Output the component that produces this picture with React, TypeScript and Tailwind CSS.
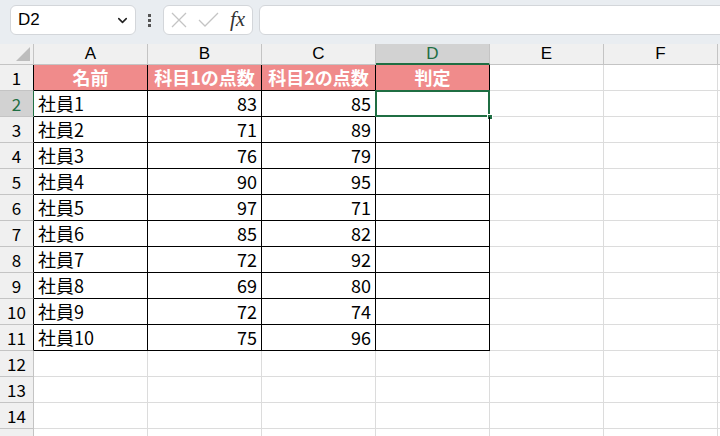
import { ChevronDown } from "lucide-react";

const cols = ["A", "B", "C", "D", "E", "F"];

const data = [
  ["社員1", 83, 85],
  ["社員2", 71, 89],
  ["社員3", 76, 79],
  ["社員4", 90, 95],
  ["社員5", 97, 71],
  ["社員6", 85, 82],
  ["社員7", 72, 92],
  ["社員8", 69, 80],
  ["社員9", 72, 74],
  ["社員10", 75, 96],
];

const font = { fontFamily: '"Noto Sans CJK JP", "Noto Sans", sans-serif' };

function RowHeader({ n, selected, table }: { n?: number; selected?: boolean; table?: boolean }) {
  // right edge doubles as the table's left border
  const edge = selected ? "border-r-[#1f6e43]" : table ? "border-r-black" : "border-r-[#c4c4c4]";
  return (
    <div
      className={`w-[34px] shrink-0 h-full flex items-center justify-center border-r border-b border-b-[#c4c4c4] text-[17px] ${edge} ${
        selected ? "bg-[#d2d2d2] text-[#1f6e43]" : "bg-[#f0f0f0] text-black"
      }`}
    >
      {n}
    </div>
  );
}

function EmptyCell() {
  return <div className="w-[114px] shrink-0 h-full border-r border-b border-[#dcdcdc]" />;
}

function Cell({ children, align = "left" }: { children?: React.ReactNode; align?: "left" | "right" }) {
  return (
    <div
      className={`w-[114px] shrink-0 h-full border-r border-b border-black flex items-center px-[4px] text-[18px] text-black ${
        align === "right" ? "justify-end" : "justify-start"
      }`}
    >
      {children}
    </div>
  );
}

export default function App() {
  return (
    <div className="w-[720px] h-[436px] overflow-hidden bg-white select-none" style={font}>
      {/* formula bar */}
      <div className="h-[44px] bg-[#e9edf1] flex items-start pt-[5px] pl-[10px] overflow-hidden">
        <div className="w-[126px] shrink-0 h-[30px] bg-white border border-[#d3d6da] rounded-[6px] flex items-center justify-between pl-[7px] pr-[5px]">
          <span className="text-[17px] text-black" style={{ fontFamily: '"Liberation Sans", sans-serif' }}>
            D2
          </span>
          <ChevronDown className="w-[15px] h-[15px] text-[#222]" strokeWidth={2.5} />
        </div>
        <div className="w-[27px] shrink-0 h-[30px] flex flex-col items-center justify-center gap-[2px]">
          <span className="w-[3px] h-[3px] bg-[#555]" />
          <span className="w-[3px] h-[3px] bg-[#555]" />
          <span className="w-[3px] h-[3px] bg-[#555]" />
        </div>
        <div className="w-[90px] shrink-0 h-[30px] bg-white border border-[#d3d6da] rounded-[6px] flex items-center pl-[7px] gap-[11px]">
          <svg width="16" height="16" viewBox="0 0 16 16" fill="none" stroke="#c4c4c4" strokeWidth="1.3">
            <path d="M1 1 L15 15 M15 1 L1 15" />
          </svg>
          <svg width="21" height="16" viewBox="0 0 21 16" fill="none" stroke="#c4c4c4" strokeWidth="1.3">
            <path d="M1 8 L7 14 L20 1" />
          </svg>
          <span
            className="text-[21px] italic text-[#333] leading-none -mt-[2px]"
            style={{ fontFamily: '"Liberation Serif", serif' }}
          >
            fx
          </span>
        </div>
        <div className="ml-[6px] w-[470px] shrink-0 h-[30px] bg-white border border-[#d3d6da] rounded-[6px]" />
      </div>

      {/* column headers */}
      <div
        className="h-[21px] flex bg-[#f0f0f0] text-[17px]"
        style={{ fontFamily: '"Liberation Sans", sans-serif' }}
      >
        <div className="w-[34px] shrink-0 h-full border-r border-b border-[#c4c4c4] relative">
          <svg className="absolute right-[3px] bottom-[3px]" width="14" height="14" viewBox="0 0 14 14">
            <path d="M14 0 L14 14 L0 14 Z" fill="#bdbdbd" />
          </svg>
        </div>
        {cols.map((c) =>
          c === "D" ? (
            <div
              key={c}
              className="w-[114px] shrink-0 h-full bg-[#d2d2d2] text-[#1f6e43] border-r border-r-[#c4c4c4] border-b-2 border-b-[#1f6e43] flex items-center justify-center"
            >
              {c}
            </div>
          ) : (
            <div
              key={c}
              className="w-[114px] shrink-0 h-full border-r border-b border-[#c4c4c4] flex items-center justify-center"
            >
              {c}
            </div>
          )
        )}
        <div className="flex-1 h-full border-b border-[#c4c4c4]" />
      </div>

      {/* row 1: header row */}
      <div className="h-[26px] flex">
        <RowHeader n={1} table />
        {["名前", "科目1の点数", "科目2の点数", "判定"].map((h) => (
          <div
            key={h}
            className="w-[114px] shrink-0 h-full bg-[#f08b8b] border-r border-b border-black flex items-center justify-center text-[18px] font-bold text-white"
          >
            {h}
          </div>
        ))}
        <EmptyCell />
        <EmptyCell />
        <div className="flex-1 h-full border-b border-[#dcdcdc]" />
      </div>

      {/* data rows */}
      {data.map((r, i) => (
        <div key={i} className="h-[26px] flex">
          <RowHeader n={i + 2} selected={i === 0} table />
          <Cell>{r[0]}</Cell>
          <Cell align="right">{r[1]}</Cell>
          <Cell align="right">{r[2]}</Cell>
          <div className="relative w-[114px] shrink-0 h-full border-r border-b border-black">
            {i === 0 && (
              <>
                <div className="absolute -left-[1px] -top-[1px] -right-[1px] -bottom-[1px] border-2 border-[#1f6e43]" />
                <div className="absolute -right-[4px] -bottom-[4px] w-[6px] h-[6px] bg-[#1f6e43] border border-white" />
              </>
            )}
          </div>
          <EmptyCell />
          <EmptyCell />
          <div className="flex-1 h-full border-b border-[#dcdcdc]" />
        </div>
      ))}

      {/* empty rows */}
      {[12, 13, 14, undefined].map((n, i) => (
        <div key={i} className="h-[26px] flex">
          <RowHeader n={n} />
          {cols.map((c) => (
            <EmptyCell key={c} />
          ))}
          <div className="flex-1 h-full border-b border-[#dcdcdc]" />
        </div>
      ))}
    </div>
  );
}
